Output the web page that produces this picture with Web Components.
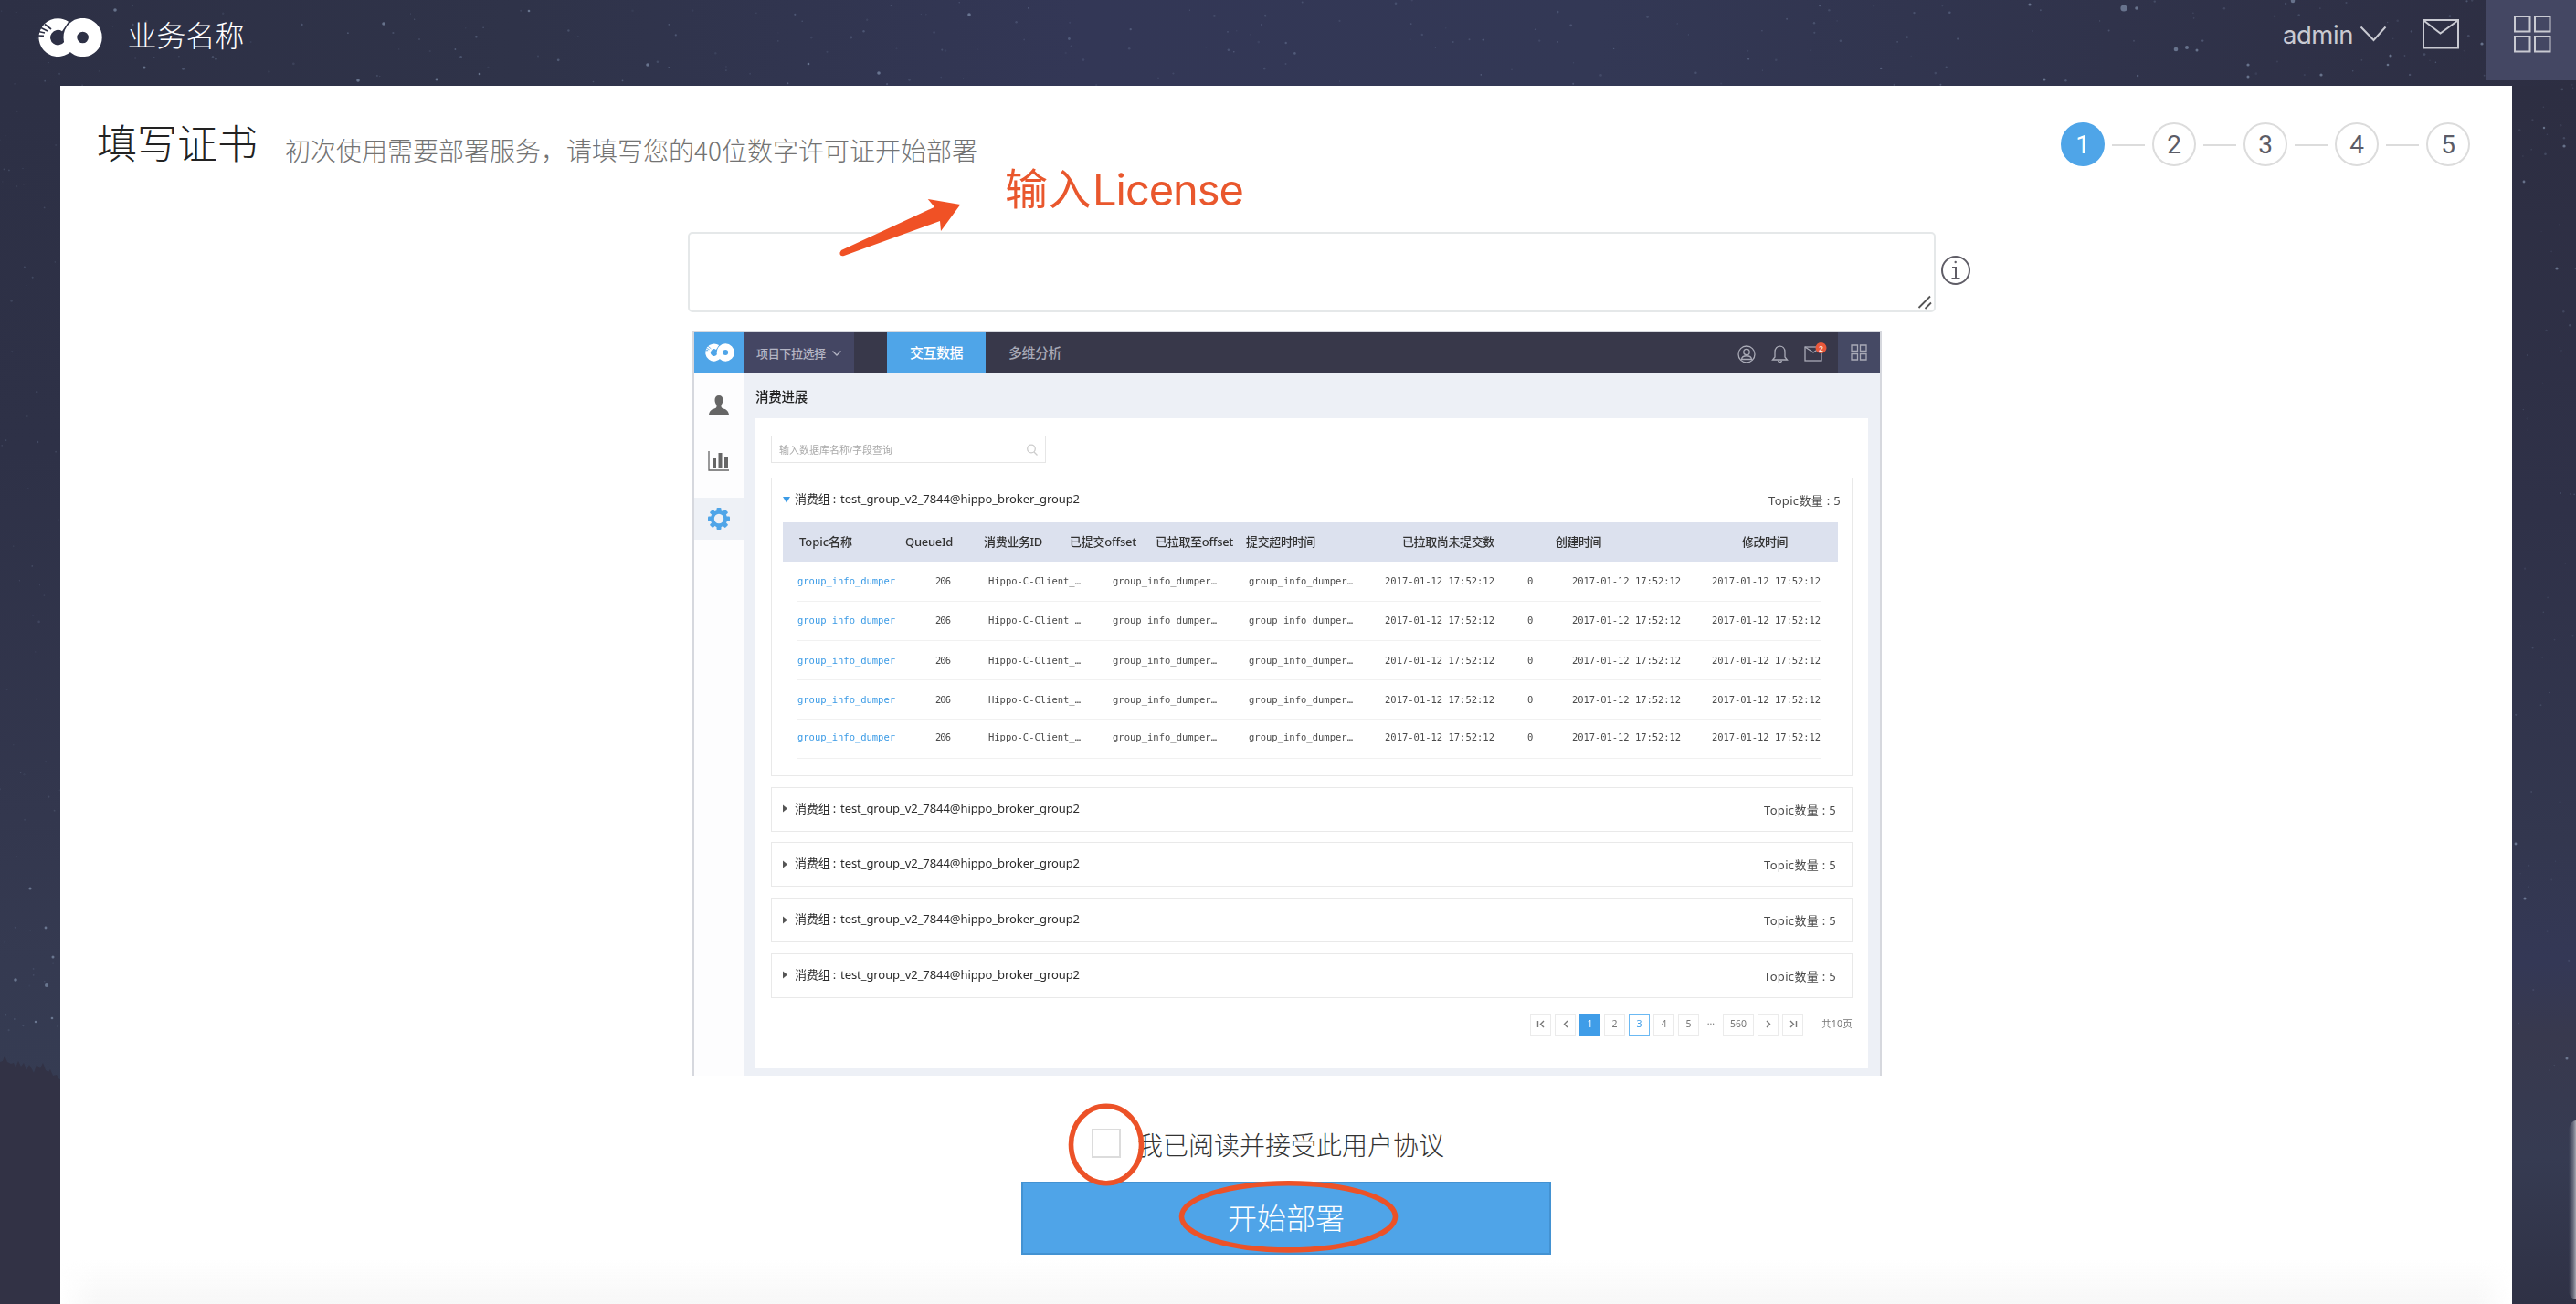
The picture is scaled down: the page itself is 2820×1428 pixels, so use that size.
<!DOCTYPE html>
<html lang="zh-CN">
<head>
<meta charset="utf-8">
<title>填写证书</title>
<style>
html,body{margin:0;padding:0;width:2820px;height:1428px;overflow:hidden;background:#2f3248}
body{font-family:"Liberation Sans","Noto Sans CJK SC",sans-serif;color:#333}
</style>
</head>
<body>
<deploy-page></deploy-page>
<script>
const LOGO = `<svg viewBox="0 0 70 42" width="100%" height="100%" style="display:block">
<path fill="none" stroke="currentColor" stroke-width="12.6" d="M29.5 9 A14.6 14.6 0 1 0 33 30 C35.5 27 34 16 38 11"/>
<circle cx="48.6" cy="21" r="13.7" fill="none" stroke="currentColor" stroke-width="14.8"/>
<g stroke="var(--logo-gap,#2d3045)" stroke-width="1.7"><path d="M7 6.5l7 5.5M3 10.500l7 3.500M0 14.500l7 1.500M0 19l6 .3"/></g></svg>`;

class View extends HTMLElement {
  constructor(){ super(); this.attachShadow({mode:'open'}); }
  connectedCallback(){ this.shadowRoot.innerHTML = `<style>*{box-sizing:border-box}${this.css()}</style>${this.html()}`; }
  css(){ return ''; }
  html(){ return '<slot></slot>'; }
}

/* A single line of text, tracked so that it fills the width in "w". */
class FitText extends View {
  css(){ return ':host{display:inline-block;white-space:nowrap;flex:none}span{display:inline-block}'; }
  html(){ return '<span><slot></slot></span>'; }
  connectedCallback(){
    super.connectedCallback();
    const w = +this.getAttribute('w'), s = this.shadowRoot.querySelector('span');
    const n = [...this.textContent].length, real = s.getBoundingClientRect().width;
    if (n && real) s.style.letterSpacing = ((w - real) / n) + 'px';
    this.style.width = w + 'px';
  }
}
customElements.define('fit-text', FitText);

class StarSky extends View {
  css(){ return ':host{display:block;position:absolute;inset:0}svg{display:block}'; }
  html(){
    let seed = 77, r = () => (seed = (seed * 16807) % 2147483647) / 2147483647, s = '';
    const star = (x,y,q,o,c) => { s += `<circle cx="${x.toFixed(1)}" cy="${y.toFixed(1)}" r="${q}" fill="${c||'#8fa3c4'}" opacity="${o}"/>`; };
    for (let i=0;i<220;i++) star(r()*2820, r()*94, (.6+r()*.8).toFixed(1), (.08+r()*.28).toFixed(2));
    for (let i=0;i<60;i++) star(r()*66, 94+r()*1040, (.6+r()*.7).toFixed(1), (.06+r()*.18).toFixed(2));
    for (let i=0;i<55;i++) star(2750+r()*70, 94+r()*1100, (.6+r()*.7).toFixed(1), (.06+r()*.18).toFixed(2));
    [[2325,9,4],[2339,9,2],[2510,1,2.5],[2382,54,2.6],[2394,52,2.2],[2405,55,1.7],[2461,71,1.8],[2461,84,1.7],[2541,82,1.8],[2617,61,1.8],[2614,71,1.5],[2717,48,1.8],[2222,5,1.8],[2238,87,1.7],
     [126,11,2],[420,26,2],[392,88,2],[478,87,1.6],[709,71,2],[962,80,2],[1061,16,2],[885,70,1.5],[525,81,1.5],[579,12,1.5],[158,74,1.7],
     [2799,294,1.8],[2807,160,1.8],[2785,140,1.4],[2763,199,1.6],[33,973,1.8],[50,1016,1.6],[58,1048,1.7],[17,1073,2],[51,1079,2.2],[57,1115,1.5],[39,1119,1.4],[2754,924,1.6],[2764,984,1.8],[2810,1159,1.7]]
     .forEach(a => star(a[0],a[1],a[2]*.9,.5,'#9fb4cf'));
    return `<svg width="2820" height="1428" viewBox="0 0 2820 1428">
<defs>
<linearGradient id="h"><stop offset="0" stop-color="#2d3045"/><stop offset=".2" stop-color="#2f3349"/><stop offset=".42" stop-color="#333756"/><stop offset=".62" stop-color="#333855"/><stop offset=".82" stop-color="#30334b"/><stop offset="1" stop-color="#2d2e42"/></linearGradient>
<linearGradient id="l" x2="0" y2="1"><stop offset="0" stop-color="#2d3045"/><stop offset=".3" stop-color="#2e3147"/><stop offset=".6" stop-color="#33374e"/><stop offset=".72" stop-color="#353a51"/><stop offset="1" stop-color="#363f55"/></linearGradient>
<linearGradient id="r" x2="0" y2="1"><stop offset="0" stop-color="#2d2e42"/><stop offset=".35" stop-color="#2f3148"/><stop offset=".62" stop-color="#33374f"/><stop offset=".72" stop-color="#343856"/><stop offset=".78" stop-color="#38394e"/><stop offset=".88" stop-color="#363b52"/><stop offset="1" stop-color="#2f3145"/></linearGradient>
<linearGradient id="b"><stop offset="0" stop-color="#9a9ba8" stop-opacity="0"/><stop offset=".55" stop-color="#9a9ba8" stop-opacity=".45"/><stop offset="1" stop-color="#a6a7b1"/></linearGradient>
</defs>
<rect width="2820" height="94" fill="url(#h)"/><rect y="94" width="66" height="1334" fill="url(#l)"/><rect x="2750" y="94" width="70" height="1334" fill="url(#r)"/>
${s}
<path fill="#323245" d="M0 1163l3-1 2-6 3 7 4 2 3-1 2 5 3-7 3 6 3-4 3 8 3-6 3 5 2 4 3-9 4 4 3-6 3 8 3 2 2-3 3 7 4-1 3 5 4 1V1428H0z"/>
<path fill="url(#b)" d="M2812 1236q3-9 8-9v196q-5 0-8-7z"/>
</svg>`;
  }
}
customElements.define('star-sky', StarSky);

class TopBar extends View {
  css(){ return `:host{display:flex;height:94px;position:relative;color:#fff}
.logo{width:70px;height:42px;margin:20px 0 0 41.500px;flex:none}
.name{margin-left:28px;height:84px;line-height:80px;font-size:32px;font-weight:300}
.right{margin-left:auto;display:flex;color:#c9cad2}
.user{font:27.500px/76px Inter,"Liberation Sans",sans-serif;height:84px}
svg{display:block}
.grid{width:98px;height:88px;background:#444763;padding:17px 0 0 30px;margin-left:30px}`; }
  html(){ return `<div class="logo">${LOGO}</div><div class="name"><fit-text w="128">业务名称</fit-text></div>
<div class="right"><div class="user"><fit-text w="77">admin</fit-text></div>
<svg width="30" height="18" style="margin:28px 0 0 7px" fill="none" stroke="currentColor" stroke-width="2"><path d="M1.500 1.500L15.500 16 28.500 1.500"/></svg>
<svg width="40" height="33" style="margin:21px 0 0 39px" fill="none" stroke="currentColor" stroke-width="2"><rect x="1" y="1" width="38" height="30.500"/><path d="M2 2l17.500 13.500L38 2"/></svg>
<div class="grid"><svg width="42" height="42" fill="none" stroke="currentColor" stroke-width="2"><rect x="1" y="1" width="16.500" height="16.500"/><rect x="23" y="1" width="16.500" height="16.500"/><rect x="1" y="23" width="16.500" height="16.500"/><rect x="23" y="23" width="16.500" height="16.500"/></svg></div></div>`; }
}
customElements.define('top-bar', TopBar);

class StepDots extends View {
  css(){ return `:host{display:flex;align-items:center;gap:8px}
b{font-weight:400;width:48px;height:48px;border:2px solid #dcdcdc;border-radius:50%;text-align:center;font:400 28px/45px Roboto,"Liberation Sans",sans-serif;color:#5c5c66}
b.on{background:#4fa5e8;border-color:#4fa5e8;color:#fff}i{width:36px;height:2px;background:#dcdcdc;margin-top:2px}`; }
  html(){ return [1,2,3,4,5].map(n => `<b class="${n==1?'on':''}">${n}</b>`).join('<i></i>'); }
}
customElements.define('step-dots', StepDots);

class LicenseField extends View {
  css(){ return `:host{display:flex;height:88px}
.box{width:1366px;height:88px;border:2px solid #e5e8e9;border-radius:5px;display:flex;justify-content:flex-end;align-items:flex-end;padding:0 2px 1px}
svg{display:block}.info{margin:25px 0 0 4.500px}`; }
  html(){ return `<div class="box"><svg width="16" height="16" stroke="#555" stroke-width="1.8"><path d="M1.500 14L14 1.500M8.500 15L15 8.500"/></svg></div>
<svg class="info" width="34" height="34" fill="none" stroke="#5f5d66" stroke-width="2"><circle cx="17" cy="17" r="15"/><path d="M13 14h4v12M12.500 26h9"/><circle cx="16.700" cy="8" r="1.200" fill="#5f5d66" stroke="none"/></svg>`; }
}
customElements.define('license-field', LicenseField);

class MockSide extends View {
  css(){ return `:host{display:flex;flex-direction:column;width:54px;background:#fdfdfe;flex:none}
div{height:46px;display:flex;align-items:center;justify-content:center;color:#666}
svg{display:block}.on{background:#eef1f6;color:#4fa5e8}`; }
  html(){
    let teeth=''; for(let i=0;i<8;i++) teeth+=`<rect x="9.500" y="0" width="5" height="5" rx="1" transform="rotate(${i*45} 12 12)"/>`;
    return `<div style="margin-top:12px"><svg width="22" height="22" viewBox="0 0 22 22" fill="currentColor"><path d="M11 0c3 0 4.500 2 4.500 5 0 3-1.300 4.500-2 6 0 2 0 2.500 2 3.300C18.500 15.500 21 16 22 21H0c1-5 3.500-5.500 6.500-6.700 2-.8 2-1.300 2-3.300-.7-1.500-2-3-2-6C6.500 2 8 0 11 0z"/></svg></div>
<div style="margin-top:15px"><svg width="24" height="22" fill="none" stroke="currentColor"><path stroke-width="1.300" d="M1 0v21h22"/><path stroke-width="4" d="M7 8v10M13.500 2v16M20 6v12"/></svg></div>
<div class="on" style="margin-top:17px"><svg width="24" height="24" fill="currentColor">${teeth}<circle cx="12" cy="12" r="7.200" fill="none" stroke="currentColor" stroke-width="4"/></svg></div>`; }
}
customElements.define('mock-side', MockSide);

class MockTop extends View {
  css(){ return `:host{display:flex;height:45px;background:#38384a;color:#a9aab6;align-items:center;flex:none}
.logo{width:54px;height:45px;background:#4fa5e8;color:#fff;padding:9px 10.500px 0 11.500px;--logo-gap:#4fa5e8}
.logo svg{height:26px!important}
.pick{width:121px;height:45px;background:#444663;display:flex;align-items:center;gap:7px;padding-left:14px;font-size:13px;color:#b4b5c4;font-weight:500}
.tab{width:108px;height:45px;margin-left:36px;background:#4fa5e8;color:#fff;font-size:15px;line-height:45px;padding-left:25px;font-weight:500}
.t2{font-size:15px;margin-left:25px;line-height:45px;font-weight:500}
.r{margin-left:auto;display:flex;align-items:center;height:45px}svg{display:block;overflow:visible}
.g{width:46px;height:45px;background:#454964;padding:13px 0 0 14px;margin-left:17px}`; }
  html(){ return `<div class="logo">${LOGO}</div><div class="pick"><fit-text w="76">项目下拉选择</fit-text><svg width="10" height="6" fill="none" stroke="currentColor" stroke-width="1.300"><path d="M.5.5L5 5 9.500.5"/></svg></div>
<div class="tab"><fit-text w="58">交互数据</fit-text></div><div class="t2"><fit-text w="58">多维分析</fit-text></div>
<div class="r"><svg width="20" height="20" fill="none" stroke="currentColor" stroke-width="1.300"><circle cx="10" cy="11" r="9"/><circle cx="10" cy="8.500" r="3.200"/><path d="M4.500 16.500c.5-5 10.500-5 11 0z"/></svg>
<svg style="margin-left:18px" width="17" height="20" fill="none" stroke="currentColor" stroke-width="1.300"><path d="M.5 17h16L14 14V8.500C14 0 3 0 3 8.500V14zM6.500 18c.5 2 3.500 2 4 0"/></svg>
<svg style="margin-left:18px" width="20" height="17" fill="none" stroke="currentColor" stroke-width="1.300"><rect x="1" y="2" width="18" height="15"/><path d="M1 2l9 6 9-6"/><circle cx="18.500" cy="3" r="6" fill="#e9583b" stroke="none"/><text x="18.500" y="6.500" text-anchor="middle" font-size="9" fill="#fff" stroke="none">2</text></svg>
<div class="g"><svg width="18" height="18" fill="none" stroke="currentColor" stroke-width="1.300"><path d="M1 1h6.500v6.500H1zM10.500 1H17v6.500h-6.500zM1 10.500h6.500V17H1zM10.500 10.500H17V17h-6.500z"/></svg></div></div>`; }
}
customElements.define('mock-top', MockTop);

class TopicTable extends View {
  css(){ return `:host{display:block;width:1155px}
.h{display:grid;height:43px;background:#dce1ee;font:500 13px/42px "Noto Sans","Noto Sans CJK SC",sans-serif;color:#333}
.row{display:grid;font:10.500px/20px "DejaVu Sans Mono",monospace;color:#4a4a4a}
.row :first-child{color:#3b9be6}.row+.row{border-top:1.500px solid #f1f1f1}
.rows{margin:0 19px 0 16px;border-bottom:1.500px solid #f1f1f1}`; }
  html(){
    const heads=[[875,58,'Topic名称'],[991,52,'QueueId'],[1077,64,'消费业务ID'],[1171,73,'已提交offset'],[1265,85,'已拉取至offset'],[1364,76,'提交超时时间'],[1535,101,'已拉取尚未提交数'],[1703,50,'创建时间'],[1907,50,'修改时间']];
    const cells=[[873,107,'group_info_dumper'],[1024,16,'206'],[1082,101,'Hippo-C-Client_…'],[1218,114,'group_info_dumper…'],[1367,114,'group_info_dumper…'],[1516,120,'2017-01-12 17:52:12'],[1672,5,'0'],[1721,119,'2017-01-12 17:52:12'],[1874,119,'2017-01-12 17:52:12']];
    const cols=a=>a.map((c,i)=>i<a.length-1?(a[i+1][0]-c[0])+'px':'1fr').join(' ');
    const tx=a=>a.map(c=>`<fit-text w="${c[1]}">${c[2]}</fit-text>`).join('');
    const hs=[[43,11],[43,9.5],[43,10.5],[43,11],[43,8.5]];
    return `<div class="h" style="grid-template-columns:${cols(heads)};padding-left:18px">${tx(heads)}</div><div class="rows">${hs.map(([h,p])=>`<div class="row" style="height:${h}px;padding-top:${p}px;grid-template-columns:${cols(cells)}">${tx(cells)}</div>`).join('')}</div>`;
  }
}
customElements.define('topic-table', TopicTable);

class ConsumerGroup extends View {
  css(){ const o=this.hasAttribute('open'); return `:host{display:block;height:${o?327:49}px;border:1.500px solid #e9e9e9;background:#fff}
.t{display:flex;align-items:center;height:${o?47:46}px;padding:0 ${o?12:17}px ${o?3:2}px 12px;font:13px/20px "Noto Sans","Noto Sans CJK SC",sans-serif;color:#2c2c2c}
svg{display:block;margin:2px ${o?5:7}px 0 0}.n{margin-left:auto;padding-top:4px;color:#4a4a4a}
.a{margin-right:5px}topic-table{margin-left:12px;margin-top:1px}`; }
  html(){ const o=this.hasAttribute('open'); return `<div class="t">${o?'<svg width="8" height="8"><path fill="#3b9be6" d="M0 1h8L4 7.500z"/></svg>':'<svg width="6" height="9"><path fill="#555" d="M0 .5l5 4L0 8.500z"/></svg>'}<fit-text class="a" w="45">消费组 :</fit-text><fit-text w="262">test_group_v2_7844@hippo_broker_group2</fit-text><div class="n"><fit-text w="79">Topic数量 : 5</fit-text></div></div>${o?'<topic-table></topic-table>':''}`; }
}
customElements.define('consumer-group', ConsumerGroup);

class PageStrip extends View {
  css(){ return `:host{display:flex;justify-content:flex-end;height:24px;gap:4px;font:10.500px/21px "Noto Sans","Noto Sans CJK SC",sans-serif;color:#777}
b{font-weight:400;width:23px;height:24px;border:1.500px solid #ebebeb;text-align:center;flex:none}
.on{background:#3f9de8;border-color:#3f9de8;color:#fff}.o{border-color:#6bb9f3;color:#3f9de8}
.d{width:18px;text-align:center;line-height:17px}b.w{width:34px}svg{display:block;margin:6.500px auto}
.s{margin-left:16px;line-height:23px}`; }
  html(){ const ic=d=>`<b><svg width="10" height="9" fill="none" stroke="#777" stroke-width="1.400"><path d="${d}"/></svg></b>`;
    return `${ic('M1.500 1v7M8 1L4.500 4.500 8 8')}${ic('M7 1L3.500 4.500 7 8')}<b class="on">1</b><b>2</b><b class="o">3</b><b>4</b><b>5</b><span class="d">…</span><b class="w">560</b>${ic('M3 1L6.500 4.500 3 8')}${ic('M8.500 1v7M2 1L5.500 4.500 2 8')}<fit-text class="s" w="34">共10页</fit-text>`; }
}
customElements.define('page-strip', PageStrip);

class ProductPreview extends View {
  css(){ return `:host{display:block;width:1302px;height:816px;border:2px solid #d6d8de;border-bottom:0;overflow:hidden;background:#edf0f6}
.all{filter:blur(.7px);display:flex;flex-direction:column;height:814px}
.body{display:flex;flex:1}.main{flex:1;padding:13px 13px 0 13px;font-size:14.500px;color:#222}
.title{line-height:26px;height:36px;font-weight:500}
.card{background:#fff;height:712px;padding:19px 17px 0 17px}
.search{width:301px;height:30px;border:1.500px solid #e6e6e6;display:flex;align-items:center;justify-content:space-between;padding:0 8px;font-size:11px;color:#aaa;margin-bottom:16px}
consumer-group+consumer-group{margin-top:11.700px}page-strip{margin-top:17px}`; }
  html(){ return `<div class="all"><mock-top></mock-top><div class="body"><mock-side></mock-side><div class="main"><div class="title"><fit-text w="57">消费进展</fit-text></div><div class="card">
<div class="search"><fit-text w="124">输入数据库名称/字段查询</fit-text><svg width="12" height="13" fill="none" stroke="#ccc" stroke-width="1.300"><circle cx="5" cy="5.500" r="4.300"/><path d="M8 9l3.500 3.500"/></svg></div>
<consumer-group open></consumer-group><consumer-group></consumer-group><consumer-group></consumer-group><consumer-group></consumer-group><consumer-group></consumer-group>
<page-strip></page-strip></div></div></div></div>`; }
}
customElements.define('product-preview', ProductPreview);

class HandNotes extends View {
  css(){ return `:host{position:absolute;inset:0;pointer-events:none}svg{position:absolute;inset:0}
p{position:absolute;left:1100px;top:179px;margin:0;display:flex;font-size:47px;line-height:58px;color:#e9572d}.l{font-family:Inter,"Liberation Sans",sans-serif;font-size:47px;margin-left:1px}`; }
  html(){ return `<svg width="2820" height="1428"><path fill="#f05125" d="M921 274L1023 226.700 1015.700 218 1051.300 224 1030 253 1029 242 924 280q-5 1-4.500-3.500z"/>
<g fill="none" stroke="#ec5228" stroke-width="5.600"><ellipse cx="1211" cy="1253.500" rx="38.500" ry="42.300"/><ellipse cx="1410.500" cy="1332.300" rx="117" ry="36.600"/></g></svg>
<p><fit-text w="95">输入</fit-text><fit-text class="l" w="165">License</fit-text></p>`; }
}
customElements.define('hand-notes', HandNotes);

class DeployPage extends View {
  css(){ return `:host{display:block;position:relative;width:2820px;height:1428px;overflow:hidden}
.panel{position:relative;width:2684px;height:1334px;margin-left:66px;background:#fff;display:flex;flex-direction:column}
.head{height:128px;display:flex;align-items:center;padding:0 46px 0 40px;flex:none}
.title{font-size:44px;line-height:60px;color:#222;font-weight:300;margin-top:1px}
.sub{font:300 28px/40px "Noto Sans CJK SC",sans-serif;color:#737373;margin:11px 0 0 30px}
step-dots{margin-left:auto}
license-field{margin:32px 0 0 687px;flex:none}product-preview{margin:20px 0 0 692px;flex:none}
.agree{display:flex;align-items:center;margin:58px 0 0 1129px;height:32px;font-size:28px;color:#333;font-weight:300}
.agree i{width:32px;height:32px;border:2px solid #dcdcdc;margin-right:18px}.agree span{padding-top:2px}
.go{margin:26px 0 0 1052px;width:580px;height:80px;background:#4fa4e8;border:2px solid #4392d2;color:#fff;font-size:32px;line-height:79px;text-align:center;font-weight:300}
.fade{margin-top:auto;height:48px;background:linear-gradient(#fff0,#f7f7f7);-webkit-mask:linear-gradient(90deg,transparent,#000 40px,#000 2644px,transparent)}`; }
  html(){ return `<star-sky></star-sky><top-bar></top-bar><div class="panel"><div class="head"><div class="title">填写证书</div><div class="sub">初次使用需要部署服务，请填写您的40位数字许可证开始部署</div><step-dots></step-dots></div>
<license-field></license-field><product-preview></product-preview>
<div class="agree"><i></i><span>我已阅读并接受此用户协议</span></div><div class="go">开始部署</div><div class="fade"></div></div><hand-notes></hand-notes>`; }
}
customElements.define('deploy-page', DeployPage);
</script>
</body>
</html>
